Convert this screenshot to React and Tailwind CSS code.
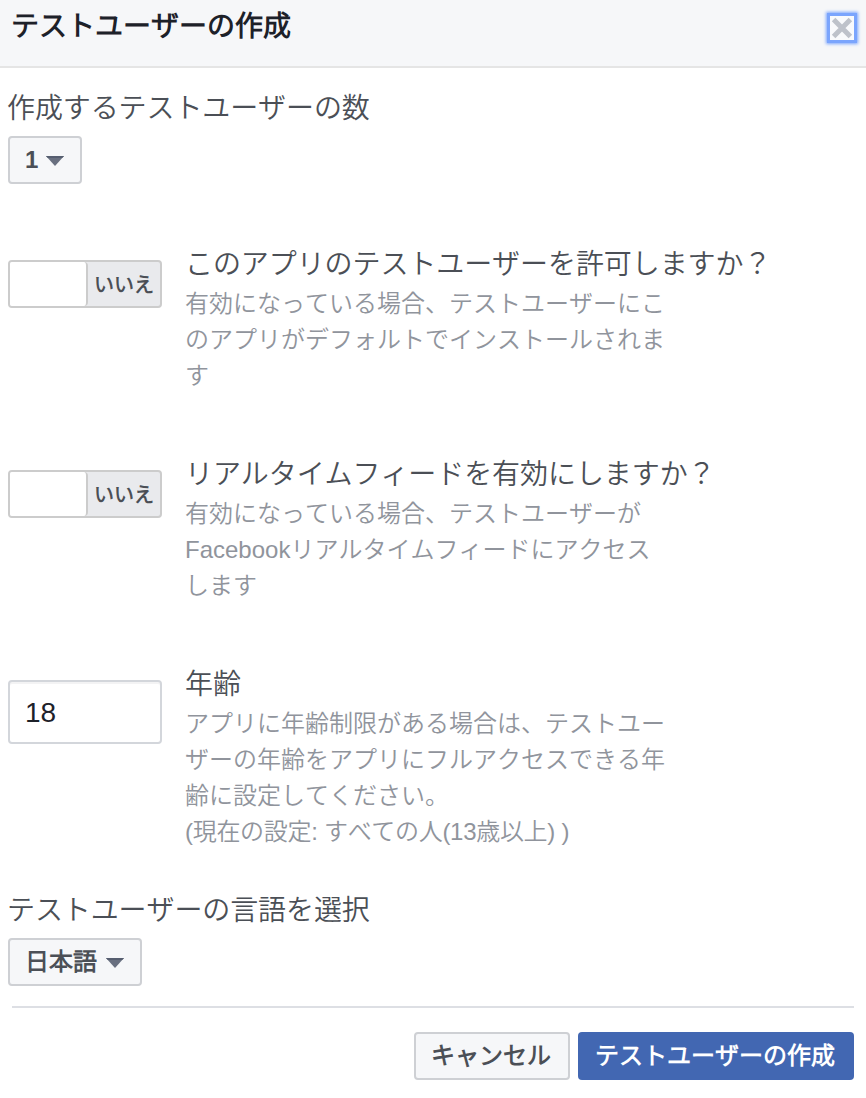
import { useState } from "react";

const toggles = [
  {
    id: "install",
    title: "このアプリのテストユーザーを許可しますか？",
    lines: [
      "有効になっている場合、テストユーザーにこ",
      "のアプリがデフォルトでインストールされま",
      "す",
    ],
  },
  {
    id: "feed",
    title: "リアルタイムフィードを有効にしますか？",
    lines: [
      "有効になっている場合、テストユーザーが",
      "Facebookリアルタイムフィードにアクセス",
      "します",
    ],
  },
];

const ageLines = [
  "アプリに年齢制限がある場合は、テストユー",
  "ザーの年齢をアプリにフルアクセスできる年",
  "齢に設定してください。",
];

function SelectButton({ children, className }) {
  return (
    <button
      type="button"
      className={`flex h-12 items-center justify-between rounded-[4px] border-2 border-[#ced0d4] bg-[#f6f7f9] pr-4 pl-[15px] text-2xl leading-none font-bold text-[#4b4f56] ${className}`}
    >
      <span>{children}</span>
      <svg width="18" height="10" viewBox="0 0 18 10" className="mt-0.5 shrink-0">
        <path d="M0 0H18L9 10Z" fill="#697080" />
        <path d="M0 0H18L16.2 2H1.8Z" fill="#565e70" />
      </svg>
    </button>
  );
}

function Toggle({ on, onClick }) {
  return (
    <button
      type="button"
      onClick={onClick}
      className="flex h-12 w-[154px] overflow-hidden rounded-[4px] border-2 border-[#cccccc] bg-[#e9eaed]"
    >
      <span className="h-full w-[78px] shrink-0 rounded-r-[4px] border-r-2 border-[#cccccc] bg-white" />
      <span className="flex h-full flex-1 items-center justify-center pt-0.5 text-xl leading-none font-bold text-[#4b4f56]">
        {on ? "はい" : "いいえ"}
      </span>
    </button>
  );
}

function Option({ control, title, lines, note, className }) {
  return (
    <div className={`flex items-start gap-[23px] ${className}`}>
      <div className="w-[154px] shrink-0">{control}</div>
      <div className="-mt-[15px]">
        <h2 className="text-[28px] leading-10 font-[350] tracking-[-0.08px] whitespace-nowrap text-[#4b4f56]">
          {title}
        </h2>
        <p className="mt-px text-2xl leading-9 font-[350] whitespace-nowrap text-[#90949c]">
          {lines.map((line) => (
            <span key={line} className="block">
              {line}
            </span>
          ))}
          {note && <span className="block tracking-[-0.3px]">{note}</span>}
        </p>
      </div>
    </div>
  );
}

export default function App() {
  const [enabled, setEnabled] = useState({ install: false, feed: false });
  const [age, setAge] = useState("18");

  return (
    <div
      lang="ja"
      className="h-[1098px] w-[866px] overflow-hidden bg-white font-['Liberation_Sans','Noto_Sans_CJK_JP_DemiLight','Noto_Sans_CJK_JP',sans-serif] [font-kerning:none]"
    >
      <header className="flex h-[68px] items-start justify-between border-b-2 border-[#e5e5e5] bg-[#f6f7f9] pr-3 pl-[11px]">
        <h1 className="mt-[7px] text-[28px] leading-10 font-bold text-[#1d2129]">テストユーザーの作成</h1>
        <button
          type="button"
          aria-label="閉じる"
          className="mt-4 flex size-6 items-center justify-center bg-[#f9fafc] shadow-[0_0_0_3px_#7ba5fd,0_0_3px_4px_#7ba5fd]"
        >
          <svg width="22" height="22" viewBox="0 0 22 22">
            <path d="M2.6 2.6L19.4 19.4M19.4 2.6L2.6 19.4" stroke="#bec2ca" strokeWidth="5" />
          </svg>
        </button>
      </header>

      <main className="px-2 pt-[21px]">
        <label className="-ml-px block text-[28px] leading-10 font-[350] tracking-[-0.1px] text-[#4b4f56]">
          作成するテストユーザーの数
        </label>
        <div className="mt-[7px]">
          <SelectButton className="w-[74px]">1</SelectButton>
        </div>

        {toggles.map(({ id, title, lines }) => (
          <Option
            key={id}
            className="mt-[76px] h-[134px]"
            title={title}
            lines={lines}
            control={
              <Toggle
                on={enabled[id]}
                onClick={() => setEnabled({ ...enabled, [id]: !enabled[id] })}
              />
            }
          />
        ))}

        <Option
          className="mt-[76px] h-[170px]"
          title="年齢"
          lines={ageLines}
          note="(現在の設定: すべての人(13歳以上) )"
          control={
            <input
              type="text"
              value={age}
              onChange={(e) => setAge(e.target.value)}
              className="h-16 w-full rounded-[4px] border-2 border-[#d3d6db] bg-white px-[15px] pt-0.5 text-[28px] text-[#1d2129] shadow-[inset_0_2px_0_#f3f3f4] outline-none"
            />
          }
        />

        <label className="mt-[41px] -ml-px block text-[28px] leading-10 font-[350] tracking-[-0.1px] text-[#4b4f56]">
          テストユーザーの言語を選択
        </label>
        <div className="mt-[7px]">
          <SelectButton className="w-[134px]">日本語</SelectButton>
        </div>
      </main>

      <footer className="mx-3 mt-5 flex justify-end gap-2 border-t-2 border-[#dddfe4] pt-6">
        <button
          type="button"
          className="h-12 w-[156px] rounded-[4px] border-2 border-[#ced0d4] bg-[#f6f7f9] pr-0.5 text-2xl leading-none font-bold whitespace-nowrap text-[#4b4f56]"
        >
          キャンセル
        </button>
        <button
          type="button"
          className="h-12 w-[276px] rounded-[4px] bg-[#4267b2] pr-0.5 text-2xl leading-none font-bold whitespace-nowrap text-white"
        >
          テストユーザーの作成
        </button>
      </footer>
    </div>
  );
}
